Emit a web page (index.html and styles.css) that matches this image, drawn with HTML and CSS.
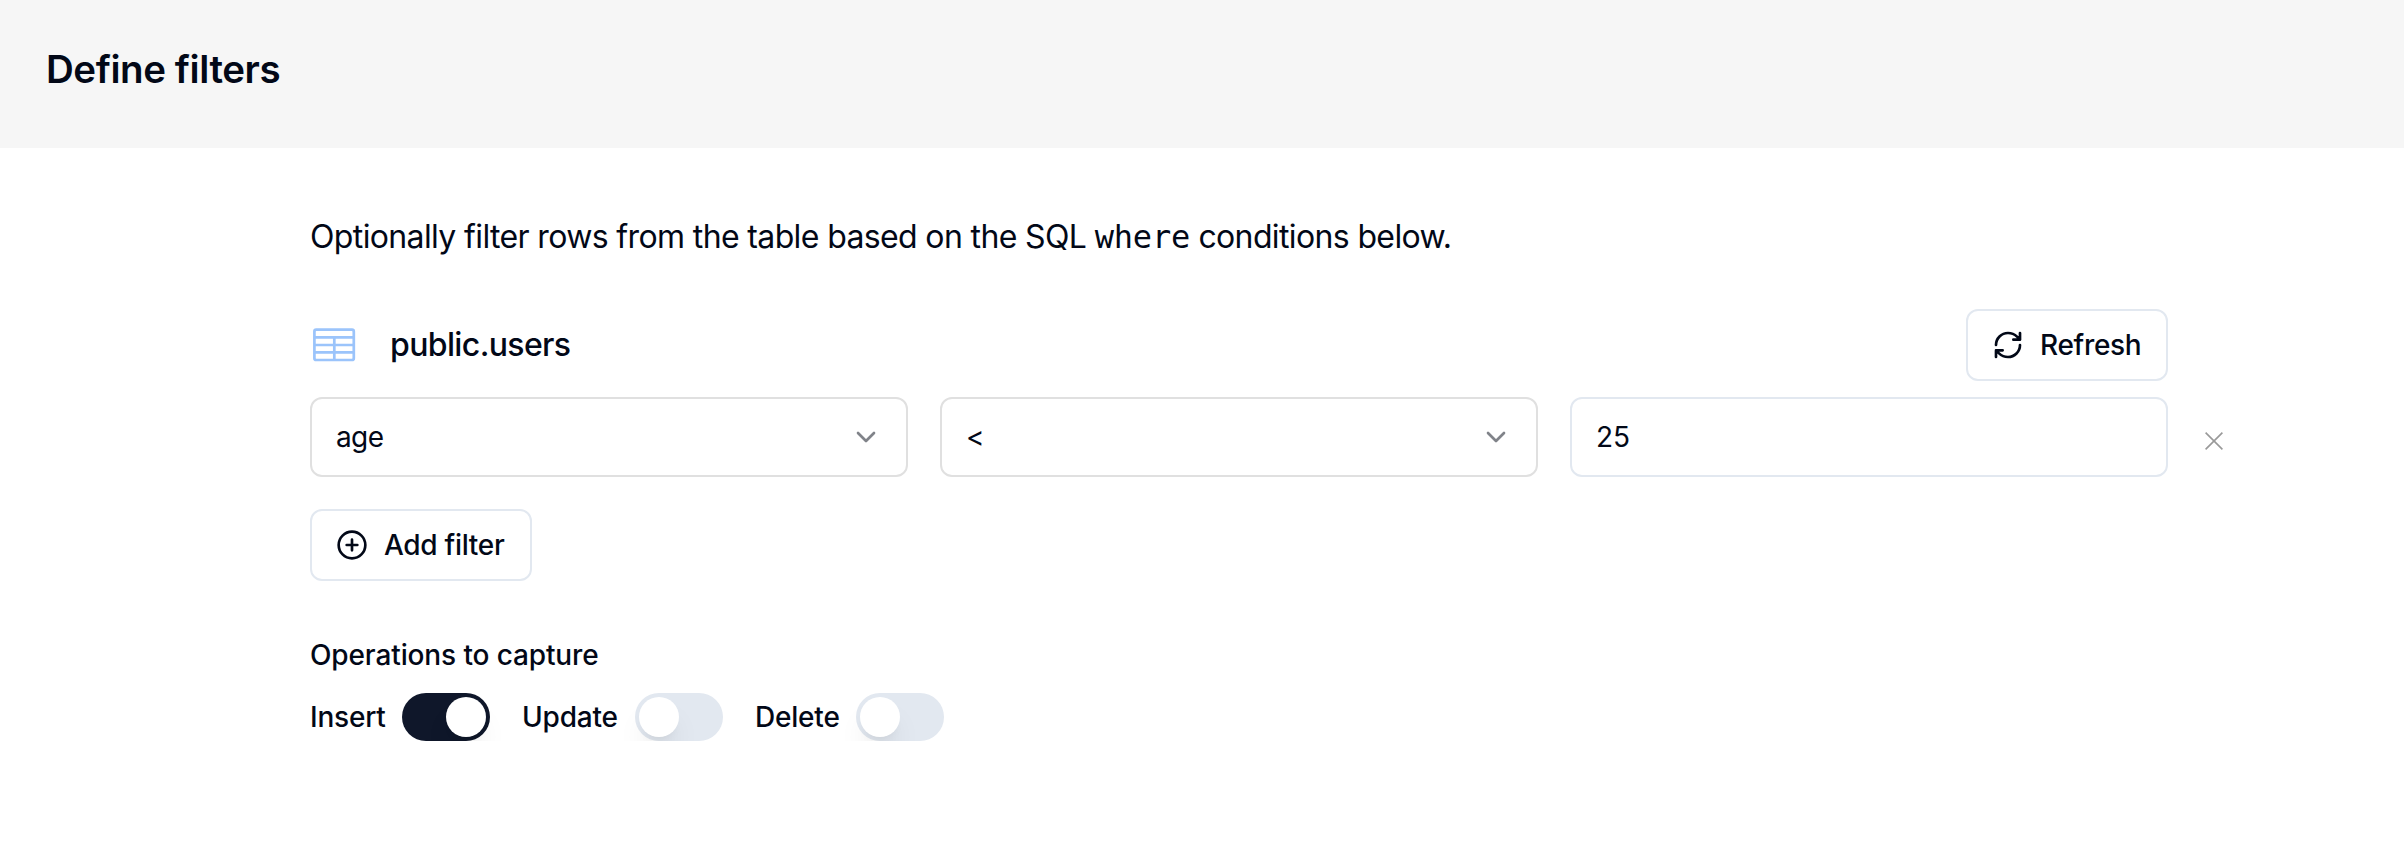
FILE: index.html
```html
<!DOCTYPE html>
<html lang="en">
<head>
<meta charset="utf-8">
<title>Define filters</title>
<link rel="stylesheet" href="styles.css">
</head>
<body>
<header class="header"><h1 class="title">Define filters</h1></header>
<main class="content">
  <p class="intro">Optionally filter rows from the table based on the SQL <code class="code">where</code> conditions below.</p>
  <div class="table-row">
    <svg class="table-icon" viewBox="0 0 48 40" fill="none" stroke="currentColor" stroke-width="2.7"><rect x="4.4" y="4.6" width="39.4" height="30.4" rx="1.8"/><path d="M4.4 12.4h39.4M4.4 20h39.4M4.4 27.4h39.4M24.3 12.4v22.6"/></svg>
    <h2 class="table-name">public.users</h2>
    <button class="button refresh" type="button">
      <svg class="icon" viewBox="0 0 24 24"><path d="M3 12a9 9 0 0 1 9-9 9.75 9.75 0 0 1 6.74 2.74L21 8M21 3v5h-5M21 12a9 9 0 0 1-9 9 9.75 9.75 0 0 1-6.74-2.74L3 16M8 16H3v5"/></svg>
      <span>Refresh</span>
    </button>
  </div>
  <div class="filter">
    <div class="field select"><span class="choice">age</span><svg class="chevron" viewBox="0 0 24 24"><path d="m6 9 6 6 6-6"/></svg></div>
    <div class="field select"><span class="choice">&lt;</span><svg class="chevron" viewBox="0 0 24 24"><path d="m6 9 6 6 6-6"/></svg></div>
    <div class="field input"><span>25</span></div>
    <svg class="remove" viewBox="0 0 18 18"><path d="m.6.6 16.8 16.8M17.4.6.6 17.4"/></svg>
  </div>
  <button class="button add" type="button">
    <svg class="icon" viewBox="0 0 24 24"><circle cx="12" cy="12" r="10"/><path d="M8 12h8M12 8v8"/></svg>
    <span>Add filter</span>
  </button>
  <h3 class="operations-title">Operations to capture</h3>
  <div class="operations">
    <label class="operation"><span class="insert">Insert</span><span class="switch on"><span class="knob"></span></span></label>
    <label class="operation"><span class="update">Update</span><span class="switch"><span class="knob"></span></span></label>
    <label class="operation"><span class="delete">Delete</span><span class="switch"><span class="knob"></span></span></label>
  </div>
</main>
</body>
</html>
```
FILE: styles.css
```css
* { box-sizing: border-box; }
body { margin: 0; background: #fff; color: #020817; font-family: Inter, sans-serif; font-size: 28px; }
h1, h2, h3, p { margin: 0; }
svg { display: block; flex: none; }
.header { height: 148px; padding: 44px 46px; background: #f6f6f6; }
.title { font-size: 38.5px; font-weight: 600; line-height: 50px; letter-spacing: -0.43px; white-space: nowrap; }
.content { width: 1858px; margin-left: 310px; padding-top: 65px; }
.intro { height: 48px; font-size: 32px; line-height: 48px; letter-spacing: -0.63px; white-space: nowrap; }
.code { font-family: "DejaVu Sans Mono", monospace; font-size: 32px; line-height: 1; letter-spacing: -0.2px; }
.table-row { display: flex; align-items: center; height: 72px; margin-top: 48px; }
.table-icon { width: 48px; height: 40px; color: #9bc4fb; }
.table-name { margin-left: 32px; font-size: 32px; font-weight: 500; line-height: 48px; letter-spacing: -0.63px; }
.button { display: flex; align-items: center; gap: 16px; height: 72px; padding: 0 24px; border: 2px solid #e2e8f0; border-radius: 12px; background: #fff; color: inherit; font: 500 28px/40px Inter, sans-serif; letter-spacing: -0.3px; white-space: nowrap; }
.refresh { width: 202px; margin-left: auto; }
.icon { width: 32px; height: 32px; fill: none; stroke: currentColor; stroke-width: 2; stroke-linecap: round; stroke-linejoin: round; }
.filter { display: grid; grid-template-columns: repeat(3, 598px) 24px; column-gap: 32px; align-items: center; margin-top: 16px; }
.field { display: flex; align-items: center; justify-content: space-between; height: 80px; padding: 0 24px; border: 2px solid #e0e0e0; border-radius: 12px; line-height: 40px; }
.choice { letter-spacing: -0.6px; }
.input { border-color: #e2e8f0; }
.chevron { width: 32px; height: 32px; fill: none; stroke: #808389; stroke-width: 2; stroke-linecap: round; stroke-linejoin: round; }
.remove { width: 18px; height: 18px; margin: 8px 0 0 5px; fill: none; stroke: #999; stroke-width: 1.6; }
.add { width: 222px; margin-top: 32px; }
.operations-title { margin-top: 54px; font-size: 28px; font-weight: 500; line-height: 40px; letter-spacing: -0.12px; white-space: nowrap; }
.operations { display: flex; gap: 32px; margin-top: 18px; }
.operation { display: flex; align-items: center; gap: 16px; height: 48px; font-weight: 500; letter-spacing: -0.2px; }
.insert { width: 76px; }
.update { width: 97px; }
.delete { width: 85px; }
.switch { display: flex; width: 88px; height: 48px; padding: 4px; border-radius: 24px; background: #e2e8f0; }
.on { justify-content: flex-end; background: #0f172a; }
.knob { width: 40px; height: 40px; border-radius: 50%; background: #fff; box-shadow: 0 20px 30px -6px rgb(0 0 0 / 10%), 0 8px 12px -8px rgb(0 0 0 / 10%); }
```
